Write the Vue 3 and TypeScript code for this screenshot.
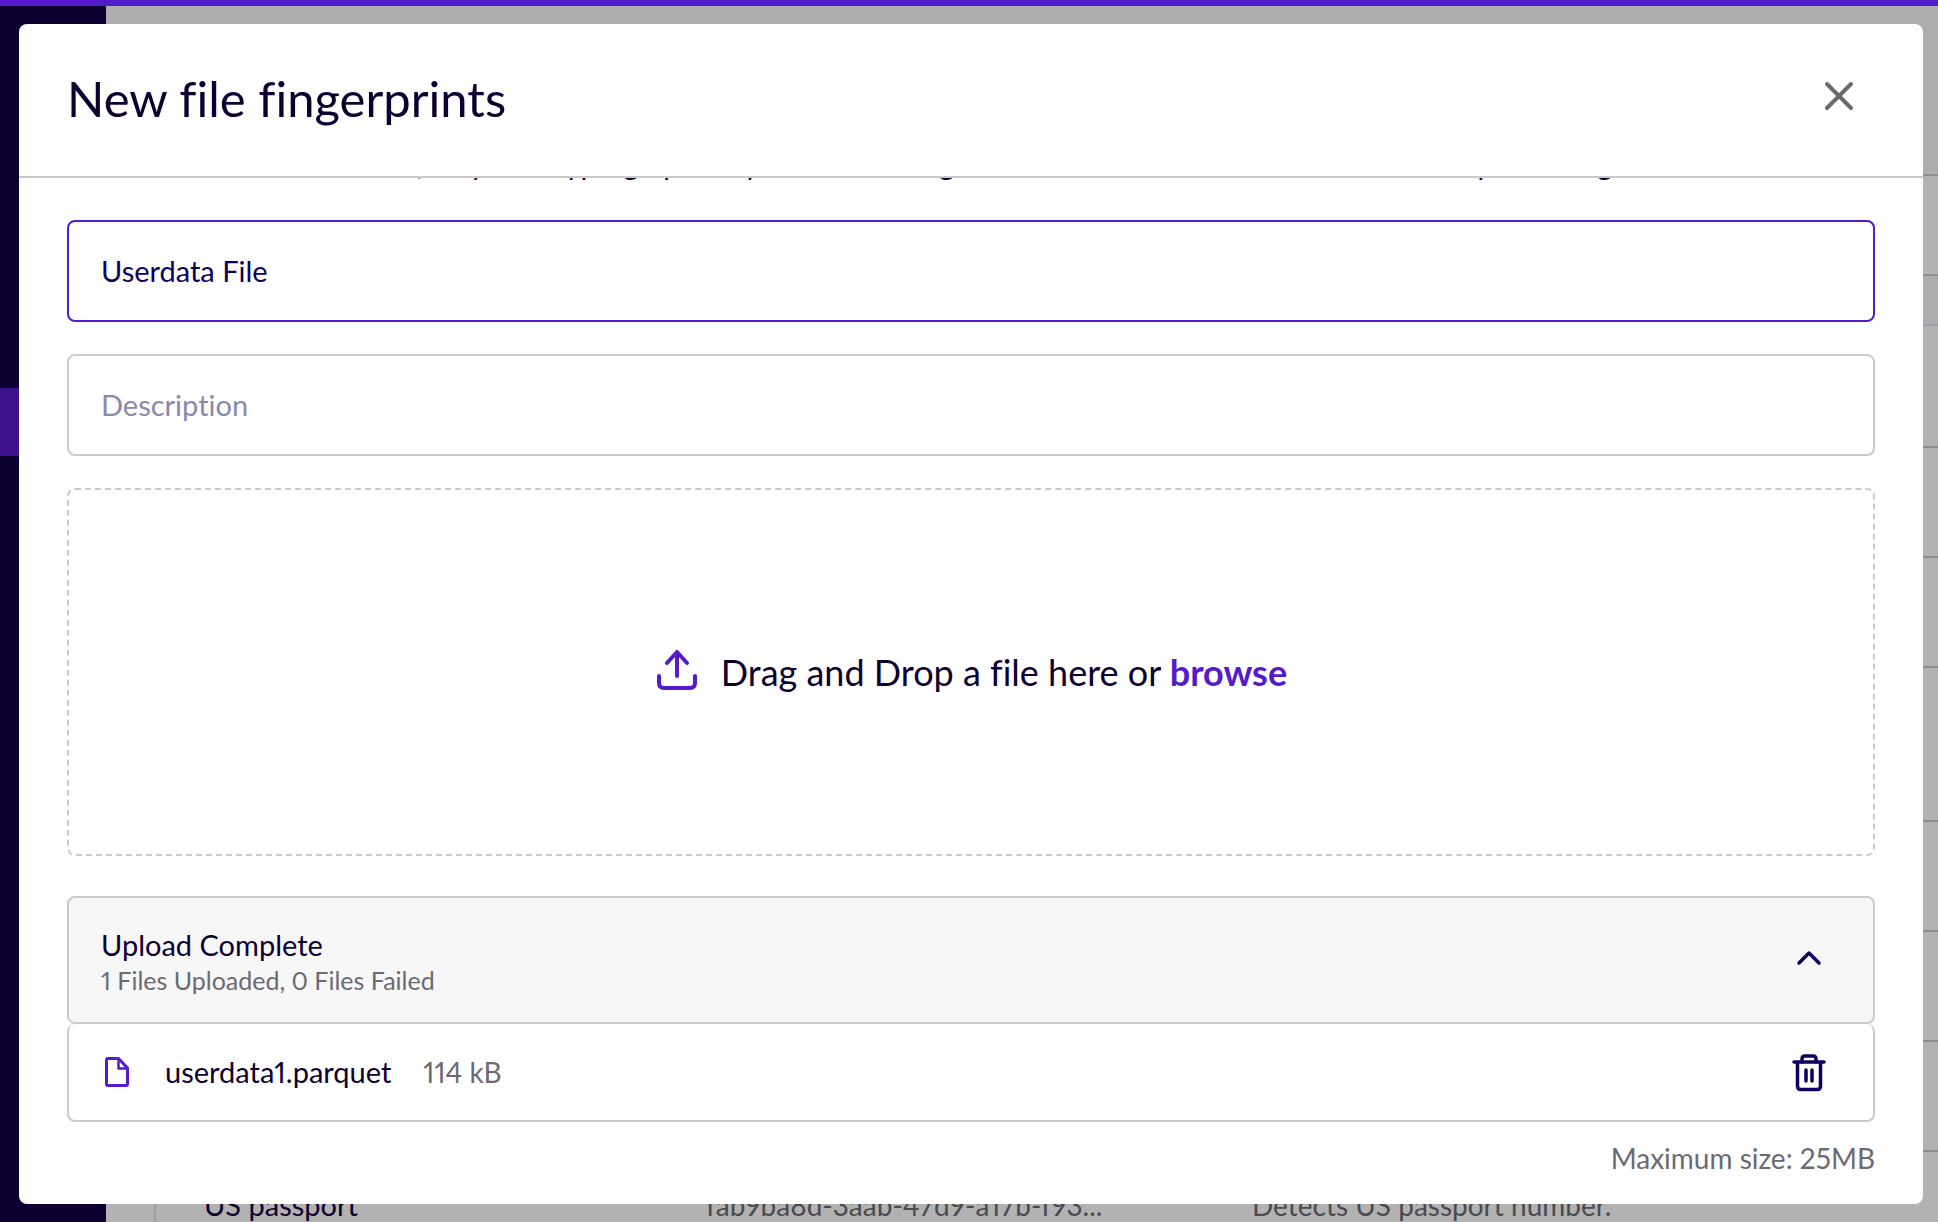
<script setup lang="ts">
import { ref } from 'vue'

interface Detector {
  name: string
  id: string
  description: string
  tall?: boolean
}

const blank: Detector = { name: '', id: '', description: '' }
const detectors: Detector[] = [
  blank,
  blank,
  blank,
  { ...blank, tall: true },
  blank,
  blank,
  blank,
  { name: 'US passport', id: 'fab9ba8d-3aab-47d9-a17b-f93...', description: 'Detects US passport number.' },
]

const name = ref('Userdata File')
const description = ref('')
const files = ref([{ name: 'userdata1.parquet', size: '114 kB' }])
</script>

<template>
  <div class="page">
    <div class="topbar"></div>
    <div class="shell">
      <nav class="sidebar"><div class="sidebar-active"></div></nav>
      <main class="main">
        <div class="band band-top"></div>
        <div class="band band-tabs"></div>
        <div class="band band-gap"></div>
        <table class="detectors">
          <colgroup>
            <col class="col-name" />
            <col class="col-id" />
            <col />
          </colgroup>
          <tbody>
            <tr v-for="(d, i) in detectors" :key="i" :class="{ tall: d.tall }">
              <td class="strong">{{ d.name }}</td>
              <td>{{ d.id }}</td>
              <td>{{ d.description }}</td>
            </tr>
          </tbody>
        </table>
      </main>
    </div>

    <section class="modal" role="dialog" aria-labelledby="modal-title">
      <header class="modal-header">
        <h1 id="modal-title">New file fingerprints</h1>
        <button class="icon-button" type="button" aria-label="Close">
          <svg width="32" height="32" viewBox="0 0 32 32" fill="none" stroke="#6b6a72" stroke-width="4" stroke-linecap="round">
            <path d="M4 4L28 28M28 4L4 28" />
          </svg>
        </button>
      </header>

      <div class="modal-body">
        <p class="intro">Files are never stored in full, only the cryptographically hashes. During a scan the stored values are used before processing</p>
        <input v-model="name" class="field active" type="text" aria-label="Name" />
        <input v-model="description" class="field" type="text" placeholder="Description" aria-label="Description" />

        <div class="dropzone">
          <svg width="44" height="44" viewBox="0 0 44 44" fill="none" stroke="#541bcc" stroke-width="4" stroke-linecap="round" stroke-linejoin="round">
            <path d="M22 2V26M12 13L22 2L32 13" />
            <path d="M4 26V33Q4 38 9 38H35Q40 38 40 33V26" />
          </svg>
          <p>Drag and Drop a file here or <a href="#">browse</a></p>
        </div>

        <div class="summary">
          <div class="summary-text">
            <h2>Upload Complete</h2>
            <p>1 Files Uploaded, 0 Files Failed</p>
          </div>
          <button class="icon-button" type="button" aria-label="Collapse">
            <svg width="40" height="40" viewBox="0 0 40 40" fill="none" stroke="#0e0060" stroke-width="3.500" stroke-linecap="round" stroke-linejoin="round">
              <path d="M10 23L20 13L30 23" />
            </svg>
          </button>
        </div>

        <div v-for="f in files" :key="f.name" class="file">
          <svg width="32" height="32" viewBox="0 0 32 32" fill="none" stroke="#541bcc" stroke-width="3" stroke-linejoin="round">
            <path d="M7 2.500H17.500L26.500 12V28Q26.500 29.500 25 29.500H7Q5.500 29.500 5.500 28V4Q5.500 2.500 7 2.500Z" />
            <path d="M17.500 3V12.500H26" stroke-width="2.500" />
          </svg>
          <span class="file-name">{{ f.name }}</span>
          <span class="file-size">{{ f.size }}</span>
          <button class="icon-button" type="button" aria-label="Delete file">
            <svg width="40" height="40" viewBox="0 0 40 40" fill="none" stroke="#0e0060" stroke-width="3.500" stroke-linecap="round" stroke-linejoin="round">
              <path d="M5 10H35M8.500 10V34Q8.500 37.500 12 37.500H28Q31.500 37.500 31.500 34V10" />
              <path d="M13 10V7Q13 4 16 4H24Q27 4 27 7V10M17 18V29M23 18V29" />
            </svg>
          </button>
        </div>

        <p class="limit">Maximum size: 25MB</p>
      </div>
    </section>
  </div>
</template>

<style>
body {
  margin: 0;
}
</style>

<style scoped>
* {
  box-sizing: border-box;
}
h1,
h2,
p {
  margin: 0;
  font-weight: 400;
}
.page {
  position: relative;
  display: flex;
  flex-direction: column;
  height: 100vh;
  overflow: hidden;
  background: #b2b2b2;
  color: #0d0030;
  font-family: Lato, "Open Sans", sans-serif;
  font-size: 29px;
  font-variant-ligatures: none;
  font-variant-numeric: proportional-nums;
  line-height: 36px;
}
.topbar {
  flex: none;
  height: 6px;
  background: #541bcc;
}
.shell {
  flex: 1;
  display: flex;
  min-height: 0;
}
.sidebar {
  flex: none;
  width: 106px;
  padding-top: 382px;
  background: #0d0030;
}
.sidebar-active {
  height: 68px;
  background: #3c128c;
}
.main {
  flex: 1;
  min-width: 0;
  overflow: hidden;
}
.band {
  border-bottom: 2px solid #8e8e8e;
}
.band-top {
  height: 170px;
  background: #adadad;
}
.band-tabs {
  height: 100px;
}
.band-gap {
  height: 50px;
  background: #adadad;
  border-color: #9e9ead;
}
.detectors {
  width: calc(100% - 48px);
  margin-left: 48px;
  table-layout: fixed;
  border-collapse: separate;
  border-spacing: 0;
  border-left: 2px solid #9e9ead;
}
.col-name {
  width: 502px;
}
.col-id {
  width: 546px;
}
.detectors td {
  height: 110px;
  padding: 0 0 2px 48px;
  border-bottom: 2px solid #8e8e8e;
  color: #4b4a50;
  font-size: 28px;
  white-space: nowrap;
}
.detectors tr:first-child td {
  height: 122px;
}
.detectors .tall td {
  height: 154px;
}
.detectors td.strong {
  color: #0d0030;
  font-size: 29px;
}
.modal {
  position: absolute;
  inset: 24px 15px 18px 19px;
  display: flex;
  flex-direction: column;
  overflow: hidden;
  border-radius: 8px;
  background: #fff;
}
.modal-header {
  flex: none;
  display: flex;
  align-items: center;
  justify-content: space-between;
  height: 154px;
  padding: 0 68px 8px 48px;
  border-bottom: 2px solid #cacaca;
}
h1 {
  padding-top: 4px;
  font-size: 49px;
  line-height: 60px;
}
.icon-button {
  display: flex;
  padding: 0;
  border: 0;
  background: none;
  cursor: pointer;
}
.modal-body {
  flex: 1;
  display: flex;
  flex-direction: column;
  justify-content: flex-end;
  min-height: 0;
  overflow: hidden;
  padding: 0 48px 28px;
}
.intro {
  margin-bottom: 38px;
  white-space: nowrap;
}
.field {
  flex: none;
  width: 100%;
  height: 102px;
  margin-bottom: 32px;
  padding: 0 32px 2px;
  border: 2px solid #cacaca;
  border-radius: 8px;
  outline: 0;
  background: #fff;
  color: #0e0060;
  font: inherit;
}
.field.active {
  border-color: #541bcc;
}
.field::placeholder {
  color: #8a88ac;
  opacity: 1;
}
.dropzone {
  flex: none;
  display: flex;
  align-items: center;
  justify-content: center;
  gap: 22px;
  height: 368px;
  margin-bottom: 40px;
  border: 2px dashed #cacaca;
  border-radius: 8px;
  font-size: 36px;
  line-height: 44px;
}
.dropzone a {
  color: #541bcc;
  font-weight: 700;
  text-decoration: none;
}
.summary {
  flex: none;
  display: flex;
  align-items: center;
  justify-content: space-between;
  height: 128px;
  padding: 0 44px 0 32px;
  border: 2px solid #cacaca;
  border-radius: 8px;
  background: #f7f7f7;
}
.summary-text {
  padding-top: 4px;
}
h2 {
  font-size: 29px;
  line-height: 36px;
}
.summary p {
  color: #6b6a72;
  font-size: 25px;
  line-height: 34px;
}
.file {
  flex: none;
  display: flex;
  align-items: center;
  height: 98px;
  padding: 0 44px 0 32px;
  border: 2px solid #cacaca;
  border-top: 0;
  border-radius: 8px;
}
.file-name {
  margin-left: 32px;
}
.file-size {
  margin-left: 32px;
  color: #6b6a72;
  font-size: 28px;
}
.file .icon-button {
  margin-left: auto;
}
.limit {
  margin-top: 18px;
  color: #6b6a72;
  font-size: 28px;
  text-align: right;
}
</style>
